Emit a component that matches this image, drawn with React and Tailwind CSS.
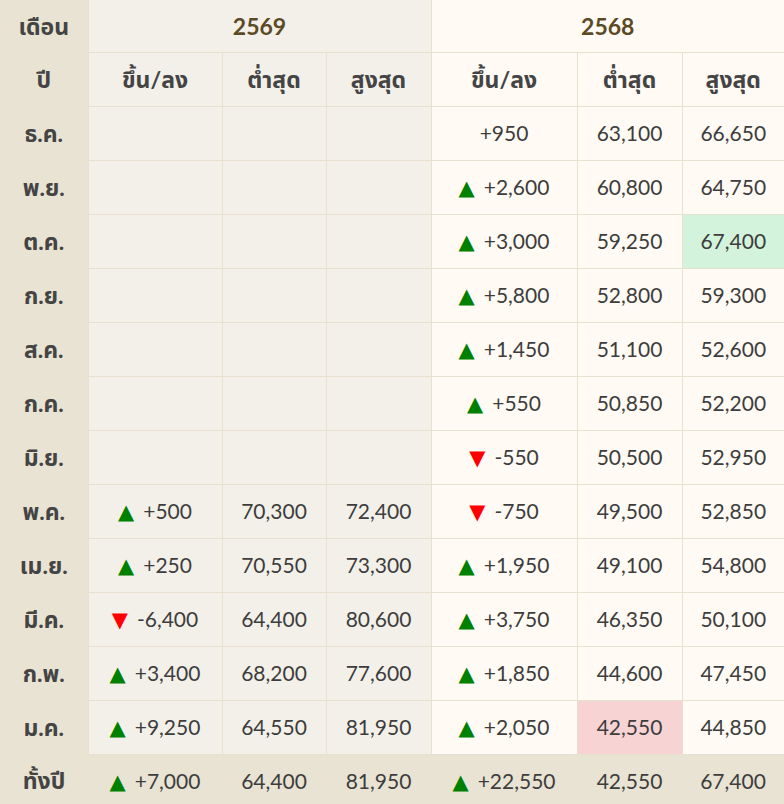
import React from "react";

const rows = [
  { m: "ธ.ค.", a: null, b: [null, 950, "63,100", "66,650"] },
  { m: "พ.ย.", a: null, b: [1, 2600, "60,800", "64,750"] },
  { m: "ต.ค.", a: null, b: [1, 3000, "59,250", "67,400"], hiMax: true },
  { m: "ก.ย.", a: null, b: [1, 5800, "52,800", "59,300"] },
  { m: "ส.ค.", a: null, b: [1, 1450, "51,100", "52,600"] },
  { m: "ก.ค.", a: null, b: [1, 550, "50,850", "52,200"] },
  { m: "มิ.ย.", a: null, b: [-1, -550, "50,500", "52,950"] },
  { m: "พ.ค.", a: [1, 500, "70,300", "72,400"], b: [-1, -750, "49,500", "52,850"] },
  { m: "เม.ย.", a: [1, 250, "70,550", "73,300"], b: [1, 1950, "49,100", "54,800"] },
  { m: "มี.ค.", a: [-1, -6400, "64,400", "80,600"], b: [1, 3750, "46,350", "50,100"] },
  { m: "ก.พ.", a: [1, 3400, "68,200", "77,600"], b: [1, 1850, "44,600", "47,450"] },
  { m: "ม.ค.", a: [1, 9250, "64,550", "81,950"], b: [1, 2050, "42,550", "44,850"], loMin: true },
];

function Change({ d }) {
  if (!d) return null;
  const [dir, v] = d;
  const s = (v > 0 ? "+" : "") + v.toLocaleString("en-US");
  return (
    <span>
      {dir === 1 && (
        <span className="text-[#008000] mr-[9px] leading-none" style={{ fontFamily: "'DejaVu Sans', sans-serif" }}>▲</span>
      )}
      {dir === -1 && (
        <span className="text-[#ff0000] mr-[9px] leading-none" style={{ fontFamily: "'DejaVu Sans', sans-serif" }}>▼</span>
      )}
      {s}
    </span>
  );
}

const cellA = "border border-[#e8e1cf] bg-[#f3f0e9] text-center";
const cellB = "border border-[#e8e1cf] bg-[#fffaf3] text-center";
const side = "bg-[#e8e3d2] text-center font-bold text-[#444] text-[23px]";
const head = "font-bold text-[#444] text-[23px]";

export default function App() {
  return (
    <div
      className="w-[784px] h-[804px] overflow-hidden text-[21px] text-[#3d3d3d]"
      style={{ fontFamily: "Lato, 'Noto Sans', 'Noto Sans Thai', sans-serif" }}
    >
      <table className="w-[784px] border-collapse table-fixed">
        <colgroup>
          <col className="w-[88px]" />
          <col className="w-[134px]" />
          <col className="w-[104px]" />
          <col className="w-[105px]" />
          <col className="w-[146px]" />
          <col className="w-[105px]" />
          <col className="w-[102px]" />
        </colgroup>
        <thead>
          <tr className="h-[52px]">
            <th className={side}>เดือน</th>
            <th colSpan={3} className={`${cellA} border-t-0 text-[#5b4a26] font-bold text-[23px]`}>2569</th>
            <th colSpan={3} className={`${cellB} border-t-0 border-r-0 text-[#5b4a26] font-bold text-[23px]`}>2568</th>
          </tr>
          <tr className="h-[54px]">
            <th className={side}>ปี</th>
            <th className={`${cellA} ${head}`}>ขึ้น/ลง</th>
            <th className={`${cellA} ${head}`}>ต่ำสุด</th>
            <th className={`${cellA} ${head}`}>สูงสุด</th>
            <th className={`${cellB} ${head}`}>ขึ้น/ลง</th>
            <th className={`${cellB} ${head}`}>ต่ำสุด</th>
            <th className={`${cellB} border-r-0 ${head}`}>สูงสุด</th>
          </tr>
        </thead>
        <tbody>
          {rows.map((r) => (
            <tr key={r.m} className="h-[54px]">
              <td className={side}>{r.m}</td>
              <td className={cellA}><Change d={r.a} /></td>
              <td className={cellA}>{r.a ? r.a[2] : ""}</td>
              <td className={cellA}>{r.a ? r.a[3] : ""}</td>
              <td className={cellB}><Change d={r.b} /></td>
              <td className={`${cellB} ${r.loMin ? "!bg-[#f8d3d3]" : ""}`}>{r.b[2]}</td>
              <td className={`${cellB} border-r-0 ${r.hiMax ? "!bg-[#d3f3dc]" : ""}`}>{r.b[3]}</td>
            </tr>
          ))}
          <tr className="h-[52px] bg-[#e8e3d2] text-center">
            <td className="font-bold text-[#444] text-[23px]">ทั้งปี</td>
            <td><Change d={[1, 7000]} /></td>
            <td>64,400</td>
            <td>81,950</td>
            <td><Change d={[1, 22550]} /></td>
            <td>42,550</td>
            <td>67,400</td>
          </tr>
        </tbody>
      </table>
    </div>
  );
}
